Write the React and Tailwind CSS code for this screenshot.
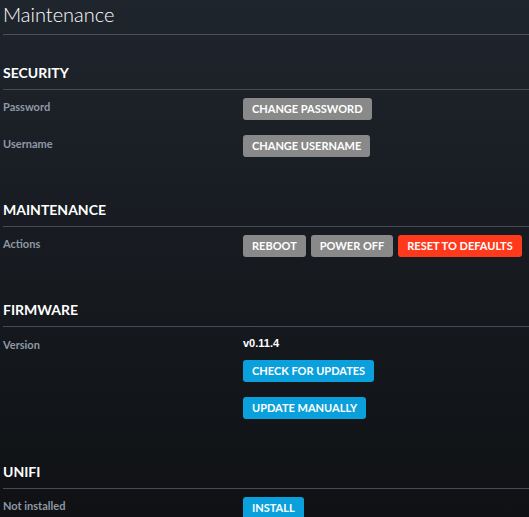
import React from "react";

const font = { fontFamily: "Lato, 'Open Sans', sans-serif" };

const Button = ({ color = "gray", children }) => {
  const colors = {
    gray: "bg-[#898989]",
    red: "bg-[#ff3a1c]",
    blue: "bg-[#0aa0dc]",
  };
  return (
    <button
      className={`h-[22px] px-[9px] rounded-[3px] text-[11px] font-bold uppercase text-white leading-[22px] whitespace-nowrap ${colors[color]}`}
    >
      {children}
    </button>
  );
};

const Section = ({ title, children, first }) => (
  <div className={first ? "mt-[28px]" : "mt-[43px]"}>
    <h3 className="text-[14px] font-bold text-white leading-[20px] pb-[6px] border-b border-[#464c54]">
      {title}
    </h3>
    <div className="pt-[8px] flex flex-col gap-[15px]">{children}</div>
  </div>
);

const Row = ({ label, children }) => (
  <div className="flex items-start">
    <div className="w-[240px] shrink-0 pt-[1px] text-[11px] font-bold text-[#8e98a5] leading-[16px]">
      {label}
    </div>
    <div className="flex gap-[5px]">{children}</div>
  </div>
);

export default function App() {
  return (
    <div
      className="h-[517px] overflow-hidden bg-gradient-to-b from-[#1f252d] to-[#0f1114] pl-[3px]"
      style={font}
    >
      <h1 className="text-[20px] font-light text-white leading-[28px] pb-[6px] border-b border-[#4a5058]">
        Maintenance
      </h1>

      <Section title="SECURITY" first>
        <Row label="Password">
          <Button>Change Password</Button>
        </Row>
        <Row label="Username">
          <Button>Change Username</Button>
        </Row>
      </Section>

      <Section title="MAINTENANCE">
        <Row label="Actions">
          <Button>Reboot</Button>
          <Button>Power Off</Button>
          <Button color="red">Reset to Defaults</Button>
        </Row>
      </Section>

      <Section title="FIRMWARE">
        <div className="flex items-start">
          <div className="w-[240px] shrink-0 pt-[2px] text-[11px] font-bold text-[#8e98a5] leading-[16px]">
            Version
          </div>
          <div className="flex flex-col items-start">
            <div
              className="text-[11px] font-bold text-white leading-[16px]"
              style={{ fontFamily: "'Liberation Sans', Arial, sans-serif" }}
            >
              v0.11.4
            </div>
            <div className="mt-[9px] flex flex-col items-start gap-[15px]">
              <Button color="blue">Check for Updates</Button>
              <Button color="blue">Update Manually</Button>
            </div>
          </div>
        </div>
      </Section>

      <Section title="UNIFI">
        <Row label="Not installed">
          <Button color="blue">Install</Button>
        </Row>
      </Section>
    </div>
  );
}
